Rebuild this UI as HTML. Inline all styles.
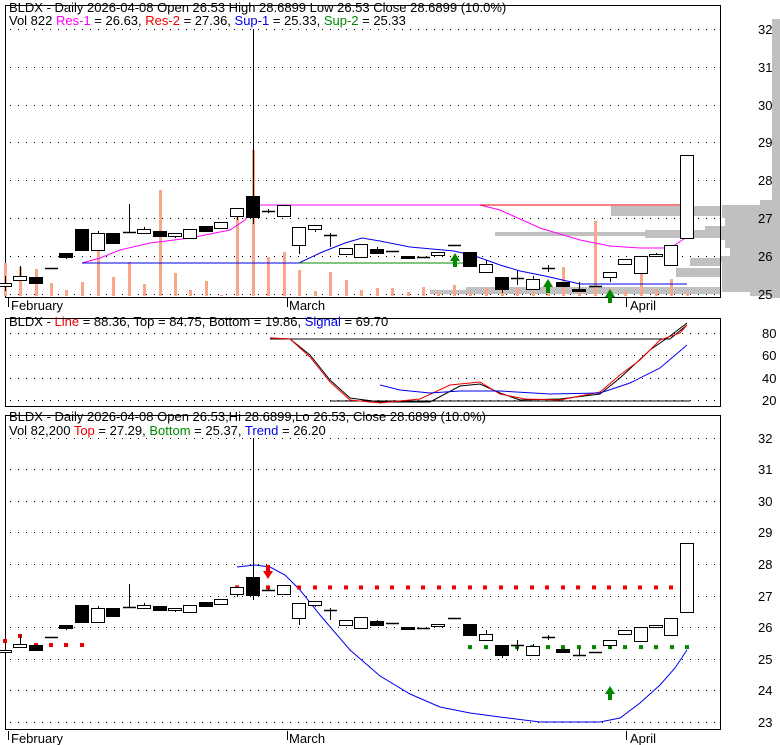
<!DOCTYPE html><html><head><style>body{margin:0;background:#fff}svg{display:block;font-family:"Liberation Sans",sans-serif;font-size:13px}</style></head><body>
<svg id="s" width="780" height="745" xmlns="http://www.w3.org/2000/svg"></svg>
<script>
const s=document.getElementById('s');let h='';
function R(x,y,w,hh,f,st){h+=`<rect x="${x}" y="${y}" width="${w}" height="${hh}" fill="${f}" ${st?`stroke="${st}"`:''}/>`}
function L(x1,y1,x2,y2,c,w){h+=`<line x1="${x1}" y1="${y1}" x2="${x2}" y2="${y2}" stroke="${c}" stroke-width="${w||1}"/>`}
function P(pts,c,d){h+=`<polyline points="${pts}" fill="none" stroke="${c}" ${d||''}/>`}
function T(x,y,t){h+=`<text x="${x}" y="${y}">${t}</text>`}
// grey profile panel1
const gp=[[19,298,772],[200,205,760],[205,218,722],[218,226,725],[226,232,705],[232,240,720],[240,248,725],[248,256,730],[256,262,720],[262,270,722],[270,278,722],[278,286,722],[286,292,722],[292,296,750]];
gp.forEach(g=>R(g[2],g[0],780-g[2],g[1]-g[0],'#c0c0c0'));
R(611,206,109,10,'#c0c0c0');R(495,232,150,4,'#c0c0c0');R(645,230,75,8,'#c0c0c0');R(690,258,30,8,'#c0c0c0');R(676,268,44,9,'#c0c0c0');R(466,287,254,3,'#c0c0c0');R(430,290,290,4,'#c0c0c0');
// panels
R(5.5,5.5,715,292,'none','#000');R(5.5,318.5,715,88,'none','#000');R(5.5,415.5,715,314,'none','#000');
function grid(y){for(let x=10;x<718;x+=8)R(x,y,1,1,'#000')}
const y1=p=>294-(p-25)*37.9, y3=p=>722-(p-23)*31.6;
for(let p=25;p<=32;p++){grid(Math.round(y1(p)));T(758,Math.round(y1(p))+5,p)}
[[80,333],[60,355],[40,378],[20,400]].forEach(a=>{grid(a[1]);T(762,a[1]+5,a[0])});
for(let p=23;p<=32;p++){grid(Math.round(y3(p)));T(758,Math.round(y3(p))+5,p)}
// volume
const vol=[[5,263],[20,267],[36,269],[51,283],[66,290],[82,282],[98,236],[113,277],[129,262],[144,284],[160,190],[175,273],[190,290],[206,281],[221,295],[237,217],[253,150],[268,257],[284,252],[299,270],[315,291],[330,272],[346,280],[361,290],[377,288],[392,288],[408,292],[423,287],[438,292],[454,285],[470,292],[486,288],[502,290],[517,288],[533,291],[548,289],[563,267],[579,291],[595,221],[610,289],[625,291],[641,273],[656,290],[671,279],[687,293]];
vol.forEach(v=>R(v[0]-1,v[1],3,296-v[1],'#f8a888'));
const c=[[5,283,286,0,276,291],[20,276,280,0,266,280],[36,277,283,1],[51,268,269,1],[66,253,257,1,253,259],[82,229,250,1],[98,233,250,0,231,250],[113,233,243,1],[129,232,233,1,204,232],[144,229,233,0,227,233],[160,231,236,1],[175,233,236,0,233,238],[190,229,238,0],[206,226,231,1],[221,222,228,0],[237,208,216,0,208,220],[253,196,217,1,29,224],[268,211,212,1,209,213],[284,205,216,0],[299,227,245,0,227,254],[315,225,229,0,225,232],[330,235,236,1,233,247],[346,248,254,0],[361,244,257,0],[377,249,253,1,247,253],[392,251,252,1],[408,256,258,1],[423,257,258,1],[438,252,255,0],[454,245,246,1],[470,252,266,1],[486,264,272,0,260,272],[502,277,289,1,277,293],[517,278,279,1,271,285],[533,279,289,0,276,289],[548,268,269,1,265,272],[563,282,286,1],[579,289,291,1,282,291],[595,286,287,1],[610,272,277,0,272,282],[625,259,264,0],[641,256,273,0],[656,254,256,0,253,256],[671,245,265,0],[687,155,238,0]];
function cand(f){c.forEach(k=>{const [x,t,b,bl,wt,wb]=k;const T1=f(t),B1=f(b);if(wt!==undefined)L(x+.5,f(wt),x+.5,f(wb),'#000');if(B1-T1<2){L(x-6,T1+.5,x+7,T1+.5,'#000',1.5)}else R(x-6.5,T1+.5,13,B1-T1,bl?'#000':'#fff','#000')})}
P('82,263 100,258 120,250 150,243 190,238 230,230 245,220 253,205 480,205 500,210 540,228 580,240 610,246 640,248 670,248 687,237','#f0f');
L(480,205,687,205,'#e00');
P('82,263 299,263 320,253 345,243 362,238 380,241 410,247 454,251 475,256 500,265 520,271 545,276 580,284 687,284','#00e');
L(299,263,470,263,'#080');
cand(v=>v);
function arrow(x,y,col,up){if(up)h+=`<polygon points="${x},${y} ${x+5},${y+8} ${x+2},${y+8} ${x+2},${y+14} ${x-2},${y+14} ${x-2},${y+8} ${x-5},${y+8}" fill="${col}"/>`;else h+=`<polygon points="${x},${y+14} ${x+5},${y+6} ${x+2},${y+6} ${x+2},${y} ${x-2},${y} ${x-2},${y+6} ${x-5},${y+6}" fill="${col}"/>`}
arrow(455,253,'#080',1);arrow(548,279,'#080',1);arrow(610,289,'#080',1);
// panel2
L(270,339,670,339,'#000');P('670,339 687,325','#000');L(330,401,690,401,'#000');
P('270,338 290,339 310,355 330,380 350,398 380,402 430,402 460,386 480,384 500,393 520,400 560,399 600,394 620,378 650,350 670,336 687,323','#000');
P('270,338 290,339 310,357 330,382 350,400 380,403 420,399 450,385 480,382 500,394 525,399 560,400 600,392 620,375 640,360 660,340 680,333 687,325','#e00');
P('380,385 400,390 430,393 460,391 500,391 550,394 600,393 630,383 660,368 687,345','#00e');
// panel3
P('237,567 255,565 270,567 285,575 300,590 320,615 350,650 380,676 410,694 440,707 470,713 500,717 540,722 600,722 620,718 640,703 660,685 675,668 687,650','#00e');
function dot(x,y,col){R(x-2,y-2,4,4,col)}
[[5,641],[20,636],[36,645],[51,645],[66,645],[82,645]].forEach(d=>dot(d[0],d[1],'#e00'));
for(let x=237;x<690;x+=15.5)dot(Math.round(x),y3(27.29)+1,'#e00');
for(let x=470;x<690;x+=15.5)dot(Math.round(x),y3(25.37),'#080');
cand(v=>Math.round(658.8-(294-v)*0.834));
arrow(268,565,'#e00',0);arrow(610,686,'#080',1);
[[8,310],[8,743]].forEach(a=>T(a[0]+3,a[1],'February'));
T(289,310,'March');T(289,743,'March');T(630,310,'April');T(630,743,'April');
[[8,298],[287,298],[626,298],[8,731],[287,731],[626,731]].forEach(a=>L(a[0]+.5,a[1],a[0]+.5,a[1]+9,'#000'));
h+=`<text x="9" y="12">BLDX - Daily 2026-04-08 Open 26.53  High 28.6899  Low 26.53  Close 28.6899 (10.0%)</text>`;
h+=`<text x="9" y="25">Vol 822 <tspan fill="#f0f">Res-1</tspan> = 26.63, <tspan fill="#e00">Res-2</tspan> = 27.36, <tspan fill="#00e">Sup-1</tspan> = 25.33, <tspan fill="#080">Sup-2</tspan> = 25.33</text>`;
h+=`<text x="9" y="326">BLDX - <tspan fill="#e00">Line</tspan> = 88.36, Top = 84.75, Bottom = 19.86, <tspan fill="#00e">Signal</tspan> = 69.70</text>`;
h+=`<text x="9" y="421">BLDX - Daily 2026-04-08 Open 26.53,Hi 28.6899,Lo 26.53, Close 28.6899 (10.0%)</text>`;
h+=`<text x="9" y="435">Vol 82,200 <tspan fill="#e00">Top</tspan> = 27.29, <tspan fill="#080">Bottom</tspan> = 25.37, <tspan fill="#00e">Trend</tspan> = 26.20</text>`;
s.innerHTML=h;
</script></body></html>
